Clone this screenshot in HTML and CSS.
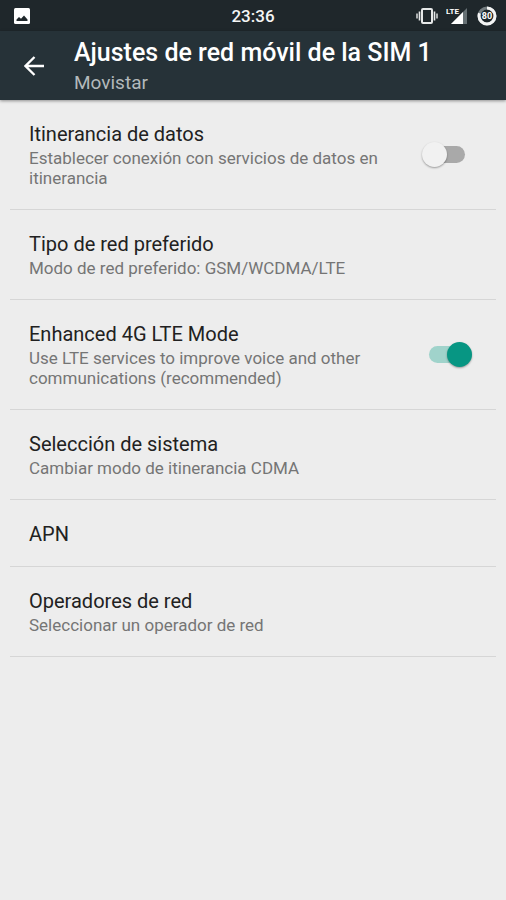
FILE: index.html
```html
<!DOCTYPE html>
<html lang="es">
<head>
<meta charset="utf-8">
<meta name="viewport" content="width=device-width, initial-scale=1">
<title>Ajustes de red móvil de la SIM 1</title>
<link rel="stylesheet" href="styles.css">
</head>
<body>
<div class="status">
  <div class="status-left">
    <svg width="16" height="16" viewBox="0 0 16 16" aria-hidden="true">
      <rect width="16" height="16" rx="1.500" fill="#fff"/>
      <path d="M2.500 13v-1.500l2.500-2.500 2 1.800 3-3.300 3.500 4V13z" fill="#1f272b"/>
    </svg>
  </div>
  <time class="clock">23:36</time>
  <div class="status-right">
    <svg width="22" height="18" viewBox="0 0 22 18" aria-hidden="true">
      <g fill="none" stroke="#e6e8e8">
        <rect x="6" y="2" width="10" height="14" rx="1" stroke-width="2"/>
        <path d="M3.500 4.500v9M18.500 4.500v9" stroke-width="1.600"/>
        <path d="M1 6.500v5M21 6.500v5" stroke-width="1.400"/>
      </g>
    </svg>
    <svg width="23" height="20" viewBox="0 0 23 20" aria-hidden="true">
      <path d="M21 2v16H5z" fill="#667074"/>
      <path d="M17 6v12H5z" fill="#fff"/>
      <text class="lte" x="0" y="8">LTE</text>
    </svg>
    <svg width="20" height="20" viewBox="0 0 20 20" aria-hidden="true">
      <circle cx="10" cy="10" r="8" fill="none" stroke="#747d80" stroke-width="3"/>
      <circle cx="10" cy="10" r="8" fill="none" stroke="#f4f5f5" stroke-width="3" stroke-dasharray="40.200 50.300" transform="rotate(-90 10 10)"/>
      <text class="charge" x="10" y="13" text-anchor="middle">80</text>
    </svg>
  </div>
</div>
<header class="bar">
  <button class="back" type="button" aria-label="Atrás">
    <svg width="20" height="20" viewBox="0 0 20 20" aria-hidden="true">
      <path d="M20 10H2M10.500 1L1.500 10l9 9" fill="none" stroke="#fff" stroke-width="2.300"/>
    </svg>
  </button>
  <div class="heading">
    <h1>Ajustes de red móvil de la SIM 1</h1>
    <p>Movistar</p>
  </div>
</header>
<main class="list">
  <label class="row">
    <span class="text"><span class="title">Itinerancia de datos</span><span class="sub">Establecer conexión con servicios de datos en itinerancia</span></span>
    <input class="switch" type="checkbox" role="switch">
  </label>
  <a class="row" href="#tipo">
    <span class="text"><span class="title">Tipo de red preferido</span><span class="sub">Modo de red preferido: GSM/WCDMA/LTE</span></span>
  </a>
  <label class="row">
    <span class="text"><span class="title">Enhanced 4G LTE Mode</span><span class="sub">Use LTE services to improve voice and other communications (recommended)</span></span>
    <input class="switch" type="checkbox" role="switch" checked>
  </label>
  <a class="row" href="#sistema">
    <span class="text"><span class="title">Selección de sistema</span><span class="sub">Cambiar modo de itinerancia CDMA</span></span>
  </a>
  <a class="row" href="#apn">
    <span class="text"><span class="title">APN</span></span>
  </a>
  <a class="row" href="#operadores">
    <span class="text"><span class="title">Operadores de red</span><span class="sub">Seleccionar un operador de red</span></span>
  </a>
</main>
</body>
</html>
```
FILE: styles.css
```css
* {
  box-sizing: border-box;
}

body {
  margin: 0;
  min-height: 100vh;
  background: #ededed;
  font-family: Roboto, "Liberation Sans", sans-serif;
}

.status {
  display: grid;
  grid-template-columns: 1fr auto 1fr;
  align-items: center;
  height: 31px;
  padding: 0 9px;
  background: #1f272b;
  color: #f4f5f5;
}

.status-left {
  padding-left: 5px;
}

.status svg {
  display: block;
}

.clock {
  font-size: 17px;
  font-weight: 500;
}

.status-right {
  display: flex;
  align-items: center;
  justify-content: flex-end;
  gap: 8px;
}

.lte {
  fill: #fff;
  font-size: 8px;
  font-weight: 700;
}

.charge {
  fill: #fff;
  font-size: 9px;
  font-weight: 700;
}

.bar {
  display: flex;
  align-items: center;
  height: 69px;
  padding: 0 24px;
  background: #263238;
  box-shadow: 0 1px 3px rgba(0, 0, 0, 0.4);
}

.back {
  display: flex;
  flex: none;
  width: 50px;
  padding: 0;
  border: 0;
  background: none;
  cursor: pointer;
}

.heading {
  flex: 1;
  padding-top: 2px;
}

.heading h1,
.heading p {
  margin: 0;
}

.heading h1 {
  color: #fff;
  font-size: 25px;
  font-weight: 500;
  line-height: 32px;
}

.heading p {
  color: #b3b9bb;
  font-size: 19px;
  line-height: 28px;
}

.list {
  padding: 0 10px;
}

.row {
  display: flex;
  align-items: center;
  gap: 32px;
  padding: 21px 24px 21px 19px;
  border-bottom: 1px solid #d6d6d6;
  color: inherit;
  text-decoration: none;
  cursor: pointer;
}

.text {
  flex: 1;
}

.title,
.sub {
  display: block;
}

.title {
  padding-top: 1px;
  color: #212121;
  font-size: 20px;
  line-height: 24px;
  margin-bottom: -1px;
}

.sub {
  margin-top: 3px;
  color: #757575;
  font-size: 17px;
  line-height: 20px;
}

.switch {
  position: relative;
  display: flex;
  flex: none;
  align-items: center;
  width: 50px;
  height: 25px;
  margin: 0;
  appearance: none;
  cursor: pointer;
}

.switch::before {
  content: "";
  width: 100%;
  height: 17px;
  margin: 0 7px;
  border-radius: 9px;
  background: #a9a9a9;
}

.switch::after {
  content: "";
  position: absolute;
  left: 0;
  width: 25px;
  height: 25px;
  border-radius: 50%;
  background: #f1f1f1;
  box-shadow: 0 1px 2px rgba(0, 0, 0, 0.35);
}

.switch:checked::before {
  background: #a0d3cb;
}

.switch:checked::after {
  left: auto;
  right: 0;
  background: #079683;
}
```
